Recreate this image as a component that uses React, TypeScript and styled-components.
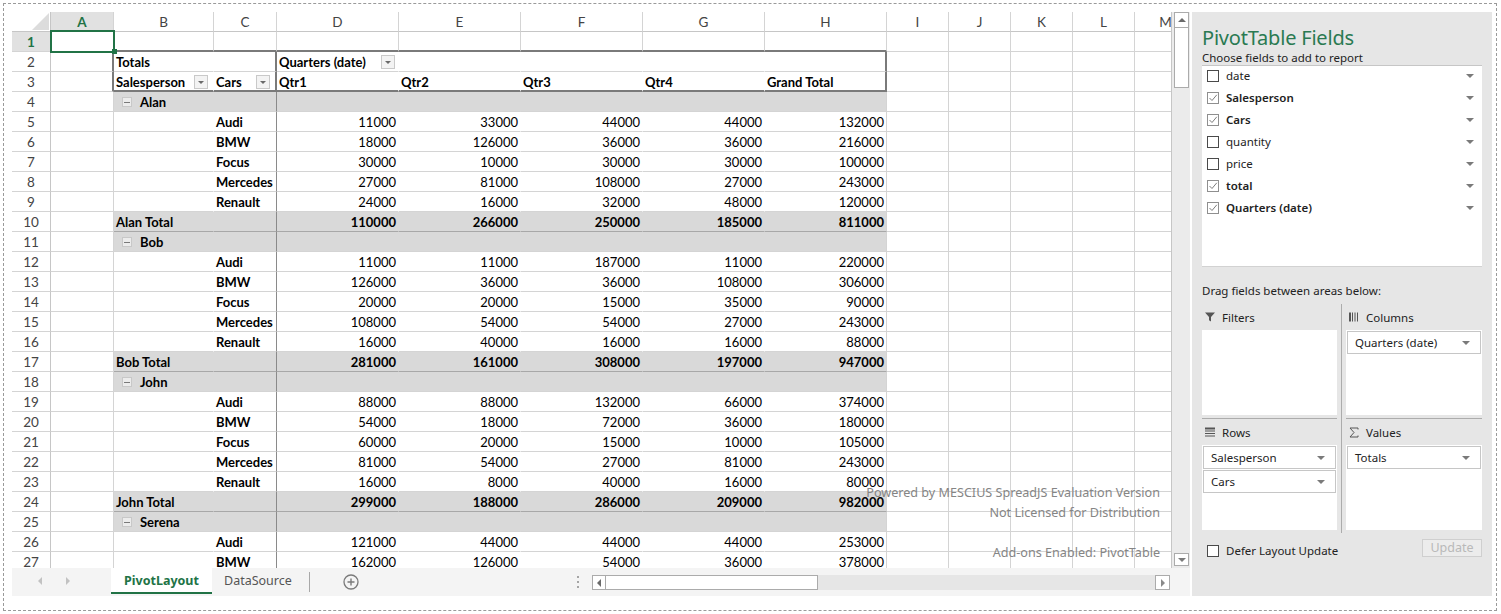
import React from 'react';
import styled, { createGlobalStyle } from 'styled-components';

const GlobalStyle = createGlobalStyle`
  html, body { margin: 0; padding: 0; background: #ffffff; }
  body { font-family: "Noto Sans", "Open Sans", sans-serif; color: #222; }
`;

const GREEN = '#217346';
const GRID = '#d4d4d4';
const DARK = '#8a8a8a';
const BOX = '#7a7a7a';
const BAND = '#d9d9d9';
const UI_FONT = '"Noto Sans", "Open Sans", sans-serif';
const CELL_FONT = 'Lato, "Noto Sans", sans-serif';

const COL_WIDTHS = [39, 63, 100, 63, 122, 122, 122, 122, 122, 62, 62, 62, 62, 62];
const LETTERS = ['A', 'B', 'C', 'D', 'E', 'F', 'G', 'H', 'I', 'J', 'K', 'L', 'M'];

type Sales = { name: string; cars: [string, number[]][]; total?: number[] };

const SALES: Sales[] = [
  {
    name: 'Alan',
    cars: [
      ['Audi', [11000, 33000, 44000, 44000, 132000]],
      ['BMW', [18000, 126000, 36000, 36000, 216000]],
      ['Focus', [30000, 10000, 30000, 30000, 100000]],
      ['Mercedes', [27000, 81000, 108000, 27000, 243000]],
      ['Renault', [24000, 16000, 32000, 48000, 120000]],
    ],
    total: [110000, 266000, 250000, 185000, 811000],
  },
  {
    name: 'Bob',
    cars: [
      ['Audi', [11000, 11000, 187000, 11000, 220000]],
      ['BMW', [126000, 36000, 36000, 108000, 306000]],
      ['Focus', [20000, 20000, 15000, 35000, 90000]],
      ['Mercedes', [108000, 54000, 54000, 27000, 243000]],
      ['Renault', [16000, 40000, 16000, 16000, 88000]],
    ],
    total: [281000, 161000, 308000, 197000, 947000],
  },
  {
    name: 'John',
    cars: [
      ['Audi', [88000, 88000, 132000, 66000, 374000]],
      ['BMW', [54000, 18000, 72000, 36000, 180000]],
      ['Focus', [60000, 20000, 15000, 10000, 105000]],
      ['Mercedes', [81000, 54000, 27000, 81000, 243000]],
      ['Renault', [16000, 8000, 40000, 16000, 80000]],
    ],
    total: [299000, 188000, 286000, 209000, 982000],
  },
  {
    name: 'Serena',
    cars: [
      ['Audi', [121000, 44000, 44000, 44000, 253000]],
      ['BMW', [162000, 126000, 54000, 36000, 378000]],
    ],
  },
];

type BodyRow =
  | { kind: 'group'; name: string }
  | { kind: 'item'; car: string; values: number[] }
  | { kind: 'total'; name: string; values: number[] };

const BODY: BodyRow[] = SALES.flatMap((s) => {
  const rows: BodyRow[] = [{ kind: 'group', name: s.name }];
  s.cars.forEach(([car, values]) => rows.push({ kind: 'item', car, values }));
  if (s.total) rows.push({ kind: 'total', name: `${s.name} Total`, values: s.total });
  return rows;
});

const FIELDS: { name: string; checked: boolean }[] = [
  { name: 'date', checked: false },
  { name: 'Salesperson', checked: true },
  { name: 'Cars', checked: true },
  { name: 'quantity', checked: false },
  { name: 'price', checked: false },
  { name: 'total', checked: true },
  { name: 'Quarters (date)', checked: true },
];

/* ---------- page frame ---------- */

const Frame = styled.div`
  margin: 3px;
  width: 1494px;
  height: 608px;
  box-sizing: border-box;
  border: 1px dashed #9a9a9a;
  padding: 8px 4px 14px 8px;
  display: flex;
  gap: 2px;
`;

const Workbook = styled.div`
  width: 1178px;
  display: flex;
  flex-direction: column;
`;

const SheetArea = styled.div`
  display: flex;
  height: 556px;
`;

const Viewport = styled.div`
  position: relative;
  width: 1159px;
  overflow: hidden;
  font-family: ${CELL_FONT};
  font-size: 13px;
  color: #000;
`;

const SheetGrid = styled.div`
  display: grid;
  grid-template-columns: ${COL_WIDTHS.map((w) => `${w}px`).join(' ')};
  grid-auto-rows: 20px;
  width: max-content;
`;

const Corner = styled.div`
  box-sizing: border-box;
  border-right: 1px solid #c6c6c6;
  border-bottom: 1px solid #c6c6c6;
  display: flex;
  align-items: flex-end;
  justify-content: flex-end;
  padding: 0 1px 1px 0;
`;

const ColHead = styled.div<{ $active?: boolean }>`
  box-sizing: border-box;
  display: flex;
  align-items: center;
  justify-content: center;
  padding-top: 1px;
  background: ${(p) => (p.$active ? '#e1e1e1' : '#ffffff')};
  color: ${(p) => (p.$active ? GREEN : '#444')};
  font-weight: ${(p) => (p.$active ? 700 : 400)};
  font-size: 13.5px;
  border-right: 1px solid ${GRID};
  border-bottom: 1px solid #c6c6c6;
`;

const RowHead = styled.div<{ $active?: boolean }>`
  box-sizing: border-box;
  display: flex;
  align-items: center;
  justify-content: center;
  padding-top: 1px;
  background: ${(p) => (p.$active ? '#e1e1e1' : '#ffffff')};
  color: ${(p) => (p.$active ? GREEN : '#444')};
  font-weight: ${(p) => (p.$active ? 700 : 400)};
  font-size: 13.5px;
  border-right: 1px solid #c6c6c6;
  border-bottom: 1px solid ${GRID};
`;

const Cell = styled.div<{
  $bg: string;
  $bold?: boolean;
  $align?: 'left' | 'right' | 'split';
  $right: string;
  $bottom: string;
  $pl?: number;
}>`
  box-sizing: border-box;
  display: flex;
  align-items: center;
  justify-content: ${(p) =>
    p.$align === 'right' ? 'flex-end' : p.$align === 'split' ? 'space-between' : 'flex-start'};
  padding: 1px 2px 0 ${(p) => p.$pl ?? 2}px;
  background: ${(p) => p.$bg};
  border-right: ${(p) => p.$right};
  border-bottom: ${(p) => p.$bottom};
  font-weight: ${(p) => (p.$bold ? 700 : 400)};
  white-space: nowrap;
`;

/* active cell with its green frame and fill handle */
const ActiveCell = styled(Cell)`
  position: relative;
  z-index: 2;
  &::before {
    content: '';
    position: absolute;
    left: -1px;
    top: -2px;
    width: 65px;
    height: 23px;
    box-sizing: border-box;
    border: 2px solid ${GREEN};
  }
  &::after {
    content: '';
    position: absolute;
    left: 61px;
    top: 17px;
    width: 5px;
    height: 5px;
    background: ${GREEN};
  }
`;

const FilterButton = styled.span<{ $ml?: number }>`
  flex: none;
  width: 14px;
  height: 14px;
  margin-right: 3px;
  margin-left: ${(p) => p.$ml ?? 0}px;
  box-sizing: border-box;
  border: 1px solid #c9c9c9;
  background: #f3f3f3;
  display: flex;
  align-items: center;
  justify-content: center;
  &::after {
    content: '';
    border-left: 3px solid transparent;
    border-right: 3px solid transparent;
    border-top: 3px solid #6a6a6a;
    margin-top: 1px;
  }
`;

const Collapse = styled.span`
  flex: none;
  width: 10px;
  height: 10px;
  box-sizing: border-box;
  border: 1px solid #c8c8c8;
  background: #ececec;
  margin-right: 8px;
  display: flex;
  align-items: center;
  justify-content: center;
  &::after {
    content: '';
    width: 6px;
    height: 1px;
    background: #7a7a7a;
  }
`;

const Watermark = styled.div`
  position: absolute;
  right: 11px;
  bottom: 5px;
  display: flex;
  flex-direction: column;
  align-items: flex-end;
  font-family: ${UI_FONT};
  font-size: 12.6px;
  line-height: 20px;
  color: #858585;
  pointer-events: none;
`;

const WatermarkGap = styled.div`
  height: 20px;
`;

/* ---------- scroll bars ---------- */

const VScroll = styled.div`
  width: 19px;
  box-sizing: border-box;
  border-left: 1px solid #c6c6c6;
  padding: 0 1px 0 2px;
  background: #ebebeb;
  display: flex;
  flex-direction: column;
`;

const ScrollButton = styled.div<{ $dir: 'up' | 'down' | 'left' | 'right'; $w: number; $h: number }>`
  flex: none;
  width: ${(p) => p.$w}px;
  height: ${(p) => p.$h}px;
  box-sizing: border-box;
  border: 1px solid #ababab;
  background: #ffffff;
  display: flex;
  align-items: center;
  justify-content: center;
  &::after {
    content: '';
    ${(p) =>
      p.$dir === 'up'
        ? 'border-left: 4px solid transparent; border-right: 4px solid transparent; border-bottom: 4px solid #6a6a6a;'
        : p.$dir === 'down'
        ? 'border-left: 4px solid transparent; border-right: 4px solid transparent; border-top: 4px solid #7a7a7a;'
        : p.$dir === 'left'
        ? 'border-top: 4px solid transparent; border-bottom: 4px solid transparent; border-right: 4px solid #6a6a6a;'
        : 'border-top: 4px solid transparent; border-bottom: 4px solid transparent; border-left: 4px solid #8a8a8a;'}
  }
`;

const VThumb = styled.div`
  height: 60px;
  box-sizing: border-box;
  border: 1px solid #ababab;
  border-top: none;
  background: #ffffff;
`;

const VTrack = styled.div`
  flex: 1;
`;

const HScroll = styled.div`
  width: 578px;
  height: 15px;
  margin-top: 7px;
  display: flex;
  background: #e6e6e6;
`;

const HThumb = styled.div`
  width: 212px;
  box-sizing: border-box;
  border: 1px solid #ababab;
  border-left: none;
  background: #ffffff;
`;

const HTrack = styled.div`
  flex: 1;
`;

/* ---------- sheet tabs ---------- */

const TabBar = styled.div`
  height: 28px;
  display: flex;
  background: #f4f4f4;
  font-family: ${UI_FONT};
`;

const TabStrip = styled.div`
  width: 563px;
  display: flex;
  align-items: flex-start;
`;

const TabNav = styled.div`
  width: 99px;
  height: 26px;
  display: flex;
  align-items: center;
  padding-left: 26px;
  gap: 24px;
  box-sizing: border-box;
`;

const NavArrow = styled.span<{ $dir: 'left' | 'right' }>`
  width: 0;
  height: 0;
  border-top: 4px solid transparent;
  border-bottom: 4px solid transparent;
  ${(p) => (p.$dir === 'left' ? 'border-right: 4px solid #c2c2c2;' : 'border-left: 4px solid #c2c2c2;')}
`;

const SheetTab = styled.div<{ $active?: boolean }>`
  height: 26px;
  box-sizing: border-box;
  display: flex;
  align-items: center;
  justify-content: center;
  padding: 0 12px;
  font-size: 12.5px;
  background: ${(p) => (p.$active ? '#ffffff' : 'transparent')};
  color: ${(p) => (p.$active ? GREEN : '#555')};
  font-weight: ${(p) => (p.$active ? 700 : 400)};
  border-bottom: 2px solid ${(p) => (p.$active ? GREEN : 'transparent')};
  width: ${(p) => (p.$active ? '101px' : 'auto')};
`;

const TabSeparator = styled.div`
  width: 1px;
  height: 20px;
  margin: 4px 0 0 5px;
  background: #a8a8a8;
`;

const AddSheet = styled.div`
  margin: 5px 0 0 33px;
  width: 16px;
  height: 16px;
`;

const Splitter = styled.div`
  width: 5px;
  display: flex;
  flex-direction: column;
  align-items: center;
  justify-content: center;
  gap: 3px;
  margin-right: 12px;
  & > span {
    width: 2px;
    height: 2px;
    background: #a5a5a5;
  }
`;

/* ---------- field list panel ---------- */

const Panel = styled.div`
  width: 300px;
  background: #e6e6e6;
  padding: 0 10px;
  box-sizing: border-box;
  display: flex;
  flex-direction: column;
  font-family: ${UI_FONT};
  font-size: 11.5px;
  color: #222;
`;

const PanelTitle = styled.div`
  margin-top: 12px;
  height: 27px;
  line-height: 27px;
  font-size: 20px;
  color: #2a7a52;
  letter-spacing: -0.2px;
`;

const PanelHint = styled.div`
  line-height: 14px;
`;

const FieldList = styled.div`
  height: 202px;
  box-sizing: border-box;
  background: #ffffff;
  border-top: 1px solid #c6c6c6;
  border-bottom: 1px solid #d2d2d2;
`;

const FieldRow = styled.div`
  height: 22px;
  box-sizing: border-box;
  display: flex;
  align-items: center;
  padding: 0 8px 3px 5px;
`;

const CheckBox = styled.span<{ $checked?: boolean }>`
  flex: none;
  width: 12px;
  height: 12px;
  box-sizing: border-box;
  border: 1px solid ${(p) => (p.$checked ? '#8f8f8f' : '#4a4a4a')};
  background: #ffffff;
  display: flex;
  align-items: center;
  justify-content: center;
`;

const FieldName = styled.span<{ $checked?: boolean }>`
  flex: 1;
  margin-left: 7px;
  font-weight: ${(p) => (p.$checked ? 600 : 400)};
`;

const Caret = styled.span`
  flex: none;
  width: 0;
  height: 0;
  border-left: 4px solid transparent;
  border-right: 4px solid transparent;
  border-top: 4px solid #7a7a7a;
`;

const DragHint = styled.div`
  margin-top: 17px;
  line-height: 14px;
`;

const AreaGrid = styled.div`
  margin-top: 6px;
  display: grid;
  grid-template-columns: 135px 9px 136px;
`;

const AreaDivider = styled.div`
  grid-column: 2;
  grid-row: 1 / span 2;
  display: flex;
  justify-content: center;
  &::before {
    content: '';
    width: 1px;
    background: #acacac;
  }
`;

const Area = styled.div<{ $first?: boolean; $col: number; $row: number }>`
  grid-column: ${(p) => p.$col};
  grid-row: ${(p) => p.$row};
  padding-bottom: 3px;
  border-bottom: ${(p) => (p.$first ? '1px solid #acacac' : 'none')};
`;

const AreaHead = styled.div`
  height: 26px;
  display: flex;
  align-items: center;
  padding-left: 3px;
  gap: 7px;
  & > svg {
    flex: none;
  }
`;

const AreaBox = styled.div`
  height: 85px;
  box-sizing: border-box;
  background: #ffffff;
  padding: 1px;
  display: flex;
  flex-direction: column;
  gap: 1px;
`;

const AreaItem = styled.div`
  height: 23px;
  box-sizing: border-box;
  border: 1px solid #c6c6c6;
  display: flex;
  align-items: center;
  justify-content: space-between;
  padding: 0 10px 0 7px;
`;

const Footer = styled.div`
  margin-top: 6px;
  display: flex;
  justify-content: space-between;
  align-items: flex-start;
`;

const DeferLabel = styled.label`
  display: flex;
  align-items: center;
  gap: 7px;
  margin: 6px 0 0 5px;
  line-height: 12px;
`;

const UpdateButton = styled.button`
  width: 60px;
  height: 18px;
  box-sizing: border-box;
  border: 1px solid #cfcfcf;
  background: #ececec;
  color: #b9b9b9;
  font-family: ${UI_FONT};
  font-size: 12.5px;
  padding: 0;
  line-height: 14px;
`;

/* ---------- icons ---------- */

const CheckMark = () => (
  <svg width="10" height="10" viewBox="0 0 10 10">
    <polyline points="1.5,5 4,7.5 8.8,1.8" fill="none" stroke="#7d7d7d" strokeWidth="1" />
  </svg>
);

const FunnelIcon = () => (
  <svg width="10" height="10" viewBox="0 0 10 10">
    <path d="M0 0.5 H10 L6 5 V9.5 L4 8.3 V5 Z" fill="#555" />
  </svg>
);

const ColumnsIcon = () => (
  <svg width="10" height="10" viewBox="0 0 10 10">
    <rect x="0" y="0.5" width="2" height="9" fill="#555" />
    <rect x="3" y="0.5" width="1" height="9" fill="#555" />
    <rect x="5.5" y="0.5" width="1" height="9" fill="#555" />
    <rect x="8" y="0.5" width="1" height="9" fill="#555" />
  </svg>
);

const RowsIcon = () => (
  <svg width="10" height="10" viewBox="0 0 10 10">
    <rect x="0" y="0.5" width="10" height="2" fill="#555" />
    <rect x="0" y="3.5" width="10" height="1" fill="#555" />
    <rect x="0" y="6" width="10" height="1" fill="#555" />
    <rect x="0" y="8.5" width="10" height="1" fill="#555" />
  </svg>
);

const SigmaIcon = () => (
  <svg width="10" height="11" viewBox="0 0 10 11">
    <polyline points="9,2.5 9,1 1,1 5,5.5 1,10 9,10 9,8.5" fill="none" stroke="#555" strokeWidth="1" />
  </svg>
);

const PlusCircle = () => (
  <svg width="16" height="16" viewBox="0 0 16 16">
    <circle cx="8" cy="8" r="7" fill="none" stroke="#7a7a7a" strokeWidth="1.3" />
    <path d="M8 4.5 V11.5 M4.5 8 H11.5" stroke="#7a7a7a" strokeWidth="1.4" />
  </svg>
);

const CornerMark = () => (
  <svg width="17" height="17" viewBox="0 0 17 17">
    <polygon points="0,17 17,0 17,17" fill="#dcdcdc" />
  </svg>
);

/* ---------- sheet rendering ---------- */

const line = (w: number, c: string) => `${w}px solid ${c}`;
const HEADER_LABELS = ['Salesperson', 'Cars', 'Qtr1', 'Qtr2', 'Qtr3', 'Qtr4', 'Grand Total'];

function renderRow(r: number) {
  const cells: React.ReactNode[] = [];
  cells.push(
    <RowHead key="h" $active={r === 1}>
      {r}
    </RowHead>
  );
  const body = r >= 4 ? BODY[r - 4] : undefined;
  const banded = body?.kind === 'group' || body?.kind === 'total';
  const bg = banded ? BAND : '#ffffff';

  for (let c = 1; c <= 13; c++) {
    const key = `c${c}`;
    const inPivot = r >= 2 && c >= 2 && c <= 8;

    // plain gridlines outside the report
    let right = line(1, GRID);
    let bottom = line(1, GRID);
    if (r === 1 && c >= 2 && c <= 8) bottom = line(2, BOX);
    if (c === 1 && (r === 2 || r === 3)) right = line(2, BOX);

    if (!inPivot) {
      if (r === 1 && c === 1) {
        cells.push(<ActiveCell key={key} $bg="#ffffff" $right={right} $bottom={bottom} />);
      } else {
        cells.push(<Cell key={key} $bg="#ffffff" $right={right} $bottom={bottom} />);
      }
      continue;
    }

    const cellBg = r <= 3 ? '#ffffff' : bg;
    if (c === 3) right = r <= 3 ? line(2, BOX) : line(1, DARK);
    else if (c === 8) right = r <= 3 ? line(2, BOX) : line(1, GRID);
    else right = line(1, cellBg);

    if (r === 3) bottom = line(2, BOX);
    else if (body?.kind === 'total') bottom = line(1, '#a8a8a8');
    else bottom = line(1, GRID);

    const base = { key, $bg: cellBg, $right: right, $bottom: bottom };

    if (r === 2) {
      if (c === 2) cells.push(<Cell {...base} $bold>Totals</Cell>);
      else if (c === 4)
        cells.push(
          <Cell {...base} $bold $align="left">
            Quarters (date)
            <FilterButton $ml={15} />
          </Cell>
        );
      else cells.push(<Cell {...base} />);
      continue;
    }
    if (r === 3) {
      const text = HEADER_LABELS[c - 2];
      if (c === 2 || c === 3)
        cells.push(
          <Cell {...base} $bold $align="split">
            {text}
            <FilterButton />
          </Cell>
        );
      else cells.push(<Cell {...base} $bold>{text}</Cell>);
      continue;
    }
    if (!body) {
      cells.push(<Cell {...base} />);
      continue;
    }
    if (body.kind === 'group') {
      if (c === 2)
        cells.push(
          <Cell {...base} $bold $pl={8}>
            <Collapse />
            {body.name}
          </Cell>
        );
      else cells.push(<Cell {...base} />);
    } else if (body.kind === 'item') {
      if (c === 3) cells.push(<Cell {...base} $bold>{body.car}</Cell>);
      else if (c >= 4)
        cells.push(
          <Cell {...base} $align="right">
            {body.values[c - 4]}
          </Cell>
        );
      else cells.push(<Cell {...base} />);
    } else {
      if (c === 2) cells.push(<Cell {...base} $bold>{body.name}</Cell>);
      else if (c >= 4)
        cells.push(
          <Cell {...base} $bold $align="right">
            {body.values[c - 4]}
          </Cell>
        );
      else cells.push(<Cell {...base} />);
    }
  }
  return cells;
}

const Sheet = () => (
  <Viewport>
    <SheetGrid>
      <Corner>
        <CornerMark />
      </Corner>
      {LETTERS.map((l) => (
        <ColHead key={l} $active={l === 'A'}>
          {l}
        </ColHead>
      ))}
      {Array.from({ length: 27 }, (_, i) => (
        <React.Fragment key={i}>{renderRow(i + 1)}</React.Fragment>
      ))}
    </SheetGrid>
    <Watermark>
      <span>Powered by MESCIUS SpreadJS Evaluation Version</span>
      <span>Not Licensed for Distribution</span>
      <WatermarkGap />
      <span>Add-ons Enabled: PivotTable</span>
    </Watermark>
  </Viewport>
);

const FieldPanel = () => (
  <Panel>
    <PanelTitle>PivotTable Fields</PanelTitle>
    <PanelHint>Choose fields to add to report</PanelHint>
    <FieldList>
      {FIELDS.map((f) => (
        <FieldRow key={f.name}>
          <CheckBox $checked={f.checked}>{f.checked && <CheckMark />}</CheckBox>
          <FieldName $checked={f.checked}>{f.name}</FieldName>
          <Caret />
        </FieldRow>
      ))}
    </FieldList>
    <DragHint>Drag fields between areas below:</DragHint>
    <AreaGrid>
      <Area $first $col={1} $row={1}>
        <AreaHead>
          <FunnelIcon />
          Filters
        </AreaHead>
        <AreaBox />
      </Area>
      <AreaDivider />
      <Area $first $col={3} $row={1}>
        <AreaHead>
          <ColumnsIcon />
          Columns
        </AreaHead>
        <AreaBox>
          <AreaItem>
            Quarters (date)
            <Caret />
          </AreaItem>
        </AreaBox>
      </Area>
      <Area $col={1} $row={2}>
        <AreaHead>
          <RowsIcon />
          Rows
        </AreaHead>
        <AreaBox>
          <AreaItem>
            Salesperson
            <Caret />
          </AreaItem>
          <AreaItem>
            Cars
            <Caret />
          </AreaItem>
        </AreaBox>
      </Area>
      <Area $col={3} $row={2}>
        <AreaHead>
          <SigmaIcon />
          Values
        </AreaHead>
        <AreaBox>
          <AreaItem>
            Totals
            <Caret />
          </AreaItem>
        </AreaBox>
      </Area>
    </AreaGrid>
    <Footer>
      <DeferLabel>
        <CheckBox />
        Defer Layout Update
      </DeferLabel>
      <UpdateButton disabled>Update</UpdateButton>
    </Footer>
  </Panel>
);

export default function App() {
  return (
    <>
      <GlobalStyle />
      <Frame>
        <Workbook>
          <SheetArea>
            <Sheet />
            <VScroll>
              <ScrollButton $dir="up" $w={15} $h={16} />
              <VThumb />
              <VTrack />
              <ScrollButton $dir="down" $w={15} $h={13} style={{ marginBottom: 2 }} />
            </VScroll>
          </SheetArea>
          <TabBar>
            <TabStrip>
              <TabNav>
                <NavArrow $dir="left" />
                <NavArrow $dir="right" />
              </TabNav>
              <SheetTab $active>PivotLayout</SheetTab>
              <SheetTab>DataSource</SheetTab>
              <TabSeparator />
              <AddSheet>
                <PlusCircle />
              </AddSheet>
            </TabStrip>
            <Splitter>
              <span />
              <span />
              <span />
            </Splitter>
            <HScroll>
              <ScrollButton $dir="left" $w={14} $h={15} />
              <HThumb />
              <HTrack />
              <ScrollButton $dir="right" $w={15} $h={15} />
            </HScroll>
          </TabBar>
        </Workbook>
        <FieldPanel />
      </Frame>
    </>
  );
}
